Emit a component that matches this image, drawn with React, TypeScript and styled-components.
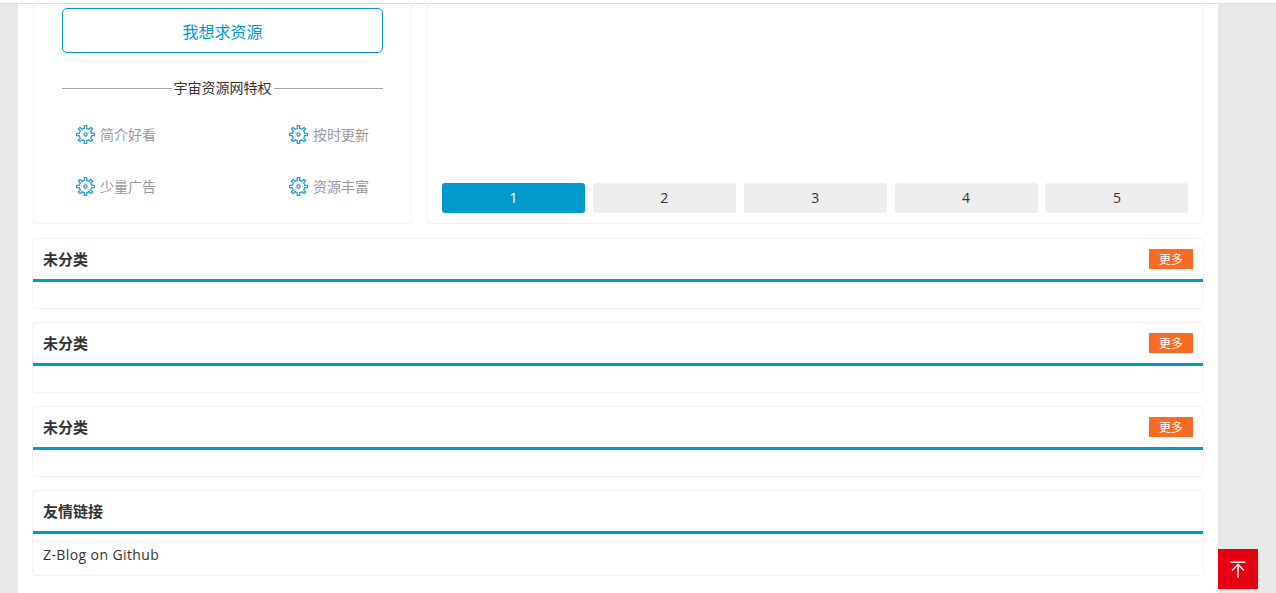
import React from "react";
import styled, { createGlobalStyle } from "styled-components";

const Global = createGlobalStyle`
  html, body { margin: 0; padding: 0; height: 100%; overflow: hidden; background: #e8e8e6; }
  body { font-family: "Open Sans", "Noto Sans CJK SC", sans-serif; font-size: 14px; color: #333; }
  * { box-sizing: border-box; }
`;

const TopLine = styled.div`
  height: 4px;
  background: #fff;
  border-bottom: 1px solid #dfdfdf;
`;

const Page = styled.div`
  width: 1200px;
  margin-left: 18px;
  height: 589px;
  background: #fff;
  padding: 0 14px 0 14px;
  overflow: hidden;
`;

const TopRow = styled.div`
  display: flex;
  gap: 15px;
  height: 220px;
  margin: 0 1px 14px 1px;
`;

const Card = styled.div`
  border: 1px solid #f2f2f2;
  border-top: none;
  border-radius: 0 0 4px 4px;
  background: #fff;
`;

const SideCard = styled(Card)`
  width: 379px;
  padding: 4px 28px 0;
`;

const AskButton = styled.a`
  display: block;
  height: 45px;
  line-height: 46px;
  border: 1px solid #0099cc;
  border-radius: 5px;
  text-align: center;
  font-size: 16px;
  color: #0099cc;
`;

const Divider = styled.div`
  display: flex;
  align-items: center;
  gap: 2px;
  margin-top: 25px;
  height: 20px;
  font-size: 14px;
  line-height: 18px;
  color: #333;
  &::before, &::after {
    content: "";
    flex: 1;
    height: 1px;
    background: #a6a6a6;
  }
`;

const Perks = styled.div`
  display: grid;
  grid-template-columns: 1fr 1fr;
  grid-auto-rows: 52px;
  margin-top: 10px;
  padding: 0 14px;
`;

const Perk = styled.div<{ $end?: boolean }>`
  display: flex;
  align-items: center;
  gap: 5px;
  height: 52px;
  font-size: 14px;
  color: #999;
  justify-self: ${(p) => (p.$end ? "end" : "start")};
`;

const MainCard = styled(Card)`
  flex: 1;
  display: flex;
  flex-direction: column;
  justify-content: flex-end;
  padding: 0 13.5px 10px 14px;
`;

const Pager = styled.div`
  display: grid;
  grid-template-columns: repeat(5, 1fr);
  gap: 7.85px;
`;

const PageBtn = styled.div<{ $active?: boolean }>`
  height: 30px;
  line-height: 30px;
  border-radius: 3px;
  text-align: center;
  font-size: 14px;
  background: ${(p) => (p.$active ? "#0099cc" : "#eeeeee")};
  color: ${(p) => (p.$active ? "#fff" : "#333")};
`;

const Section = styled.section`
  border: 1px solid #f2f2f2;
  border-radius: 4px;
  margin-bottom: 13px;
  background: #fff;
`;

const SectionHead = styled.div`
  display: flex;
  align-items: center;
  justify-content: space-between;
  height: 43px;
  padding: 0 10px;
  border-bottom: 3px solid #0099cc;
`;

const SectionTitle = styled.h3`
  margin: 0;
  font-size: 15px;
  line-height: 20px;
  font-weight: 700;
  color: #333;
`;

const More = styled.a`
  display: block;
  width: 44px;
  height: 20px;
  line-height: 22px;
  text-align: center;
  font-size: 12px;
  color: #fff;
  background: #f76b25;
`;

const SectionBody = styled.div`
  min-height: 26px;
  padding: 0 10px;
  line-height: 41px;
  font-size: 14px;
  letter-spacing: 0.4px;
  color: #333;
`;

const BackTop = styled.a`
  position: fixed;
  left: 1218px;
  top: 549px;
  width: 40px;
  height: 40px;
  padding-right: 1px;
  background: #e60012;
  display: flex;
  align-items: center;
  justify-content: center;
`;

const GearIcon = styled.svg`
  display: block;
  margin-top: 1px;
`;

function gearPath(cx: number, cy: number, teeth: number, rOut: number, rIn: number) {
  const pts: string[] = [];
  const step = (Math.PI * 2) / teeth;
  for (let i = 0; i < teeth; i++) {
    const a = i * step - Math.PI / 2;
    const at = (r: number, d: number) =>
      `${(cx + r * Math.cos(a + d)).toFixed(2)} ${(cy + r * Math.sin(a + d)).toFixed(2)}`;
    pts.push(at(rIn, -step * 0.24), at(rOut, -step * 0.17), at(rOut, step * 0.17), at(rIn, step * 0.24));
  }
  return `M${pts.join("L")}Z`;
}

const Gear = () => (
  <GearIcon width="19" height="19" viewBox="0 0 19 19" fill="none" stroke="#2a9bd0" strokeWidth="1.3" strokeLinejoin="miter">
    <path d={gearPath(9.5, 9.5, 8, 9, 6.4)} />
    <circle cx="9.5" cy="9.5" r="1.6" />
  </GearIcon>
);

const PERKS = ["简介好看", "按时更新", "少量广告", "资源丰富"];

export default function App() {
  return (
    <>
      <Global />
      <TopLine />
      <Page>
        <TopRow>
          <SideCard>
            <AskButton>我想求资源</AskButton>
            <Divider>宇宙资源网特权</Divider>
            <Perks>
              {PERKS.map((t, i) => (
                <Perk key={t} $end={i % 2 === 1}>
                  <Gear />
                  {t}
                </Perk>
              ))}
            </Perks>
          </SideCard>
          <MainCard>
            <Pager>
              {[1, 2, 3, 4, 5].map((n) => (
                <PageBtn key={n} $active={n === 1}>{n}</PageBtn>
              ))}
            </Pager>
          </MainCard>
        </TopRow>
        {[0, 1, 2].map((i) => (
          <Section key={i}>
            <SectionHead>
              <SectionTitle>未分类</SectionTitle>
              <More>更多</More>
            </SectionHead>
            <SectionBody />
          </Section>
        ))}
        <Section>
          <SectionHead>
            <SectionTitle>友情链接</SectionTitle>
          </SectionHead>
          <SectionBody>Z-Blog on Github</SectionBody>
        </Section>
      </Page>
      <BackTop>
        <svg width="16" height="17" viewBox="0 0 16 17" fill="none" stroke="#fff" strokeWidth="1.5">
          <path d="M0.5 1.2H15.5" />
          <path d="M8 17V3.5" />
          <path d="M2 9.5L8 3.5L14 9.5" />
        </svg>
      </BackTop>
    </>
  );
}
